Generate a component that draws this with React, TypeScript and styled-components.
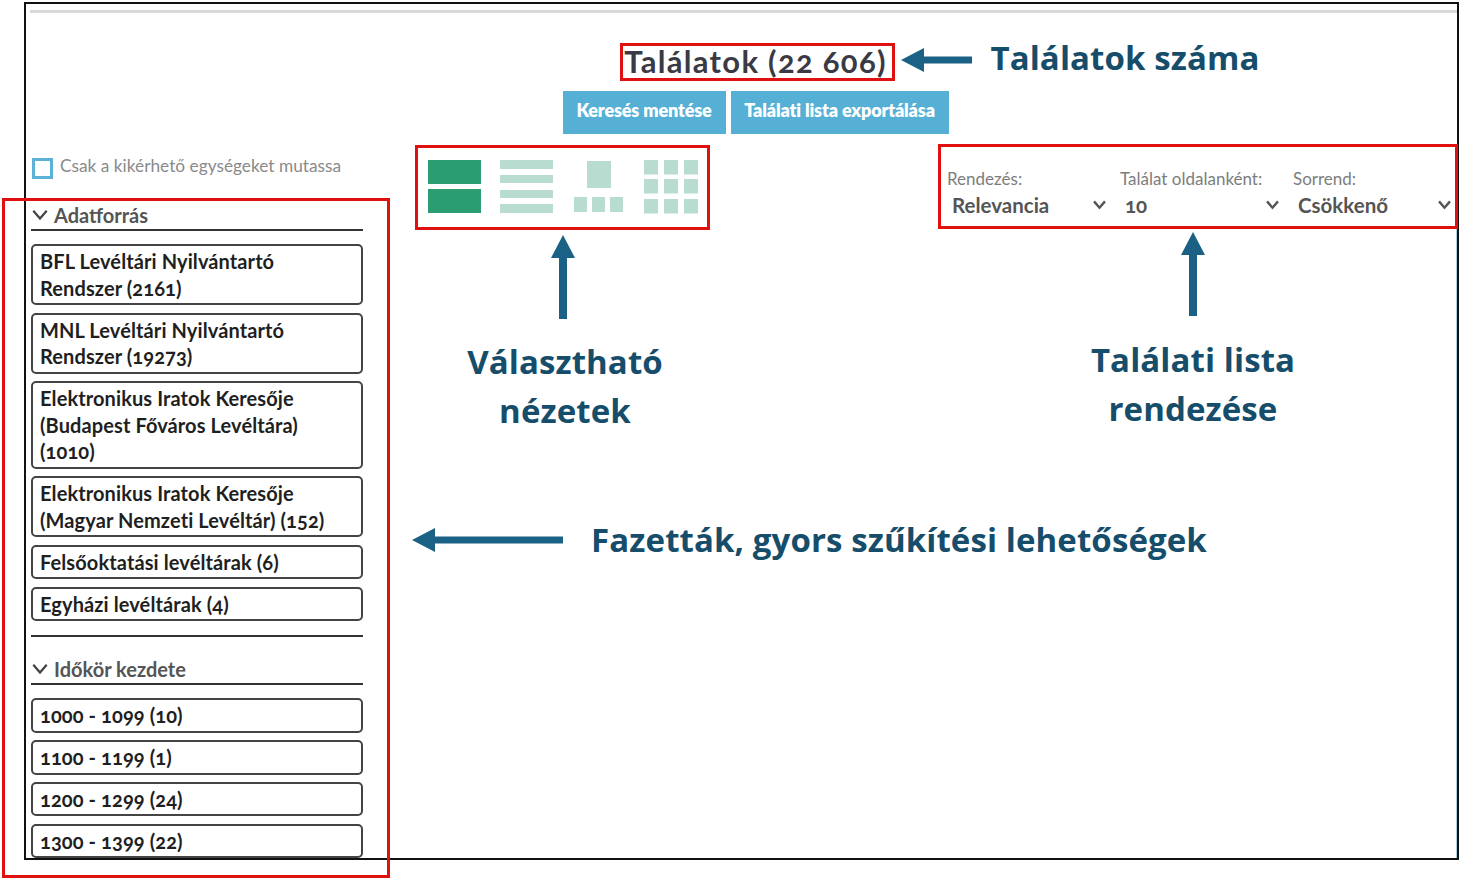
import React from "react";
import styled, { createGlobalStyle } from "styled-components";

const Global = createGlobalStyle`
  html, body { margin: 0; padding: 0; background: #fff; }
  body { width: 1460px; height: 878px; overflow: hidden; font-family: Lato, "Open Sans", sans-serif; font-variant-numeric: oldstyle-nums; }
  * { box-sizing: border-box; }
`;

const Page = styled.div`
  position: relative;
  width: 1460px;
  height: 878px;
  padding: 2px 1px 18px 24px;
  background: #fff;
`;

const Frame = styled.div`
  width: 100%;
  height: 100%;
  border: 2px solid #111;
  overflow: hidden;
  padding: 6px 0 0 4px;
`;

const EdgeTint = styled.div`
  position: absolute;
  left: 1456px;
  top: 229px;
  width: 1px;
  height: 629px;
  background: #a9d0e0;
`;

const TopRule = styled.div`
  height: 3px;
  background: #d9d9d9;
`;

const Header = styled.header`
  display: flex;
  flex-direction: column;
  align-items: center;
  padding: 29px 0 0 0;
  margin-left: 24px;
`;

const Title = styled.h1`
  margin: 0;
  font-size: 31px;
  line-height: 38px;
  font-weight: 700;
  color: #3a3a44;
  letter-spacing: 1.3px;
`;

const Buttons = styled.div`
  display: flex;
  gap: 5px;
  margin-top: 11px;
`;

const ActionButton = styled.button<{ $w: number }>`
  width: ${(p) => p.$w}px;
  height: 43px;
  border: 0;
  padding: 0 0 5px;
  background: #56b0d6;
  color: #fff;
  font: 800 18px/38px Lato, sans-serif;
  letter-spacing: -0.15px;
`;

const Columns = styled.div`
  display: grid;
  grid-template-columns: 332px 1fr;
  column-gap: 52px;
  padding-left: 1px;
`;

const Sidebar = styled.aside`
  display: flex;
  flex-direction: column;
  padding-top: 24px;
`;

const CheckRow = styled.label`
  display: flex;
  align-items: flex-start;
  gap: 7px;
  height: 41px;
  margin-left: 1px;
  color: #8a8a8a;
  font-size: 17.3px;
  line-height: 15px;
`;

const CheckBox = styled.span`
  width: 21px;
  height: 21px;
  border: 3px solid #5cb1d6;
  flex: none;
`;

const Section = styled.section`
  display: flex;
  flex-direction: column;
`;

const SectionHead = styled.div`
  display: flex;
  align-items: center;
  gap: 6px;
  height: 32px;
  border-bottom: 2px solid #333;
  padding: 1px 0 0 1px;
  color: #555;
  font-size: 20px;
  font-weight: 700;
`;

const FacetList = styled.div<{ $gap: number }>`
  display: flex;
  flex-direction: column;
  gap: ${(p) => p.$gap}px;
  margin-top: 13px;
`;

const Facet = styled.div`
  border: 2px solid #444;
  border-radius: 5px;
  padding: 2px 7px;
  color: #1f1f1f;
  font-size: 20px;
  line-height: 26.5px;
  font-weight: 700;
  letter-spacing: 0.1px;
`;

const Divider = styled.div`
  height: 2px;
  background: #333;
  margin: 14px 0 16px;
`;

const Main = styled.main`
  display: flex;
  justify-content: space-between;
  align-items: flex-start;
  padding-top: 26px;
`;

const Views = styled.svg`
  display: block;
  width: 270px;
  height: 54px;
  margin-left: 13px;
  filter: blur(0.4px);
`;

const SortBar = styled.div`
  display: grid;
  grid-template-columns: 173px 173px 158px;
  margin-top: 9px;
  margin-right: 6px;
`;

const SortField = styled.div`
  display: flex;
  flex-direction: column;
  padding-right: 14px;
  &:last-child {
    padding-right: 0;
  }
`;

const SortLabel = styled.span`
  color: #7d7d7d;
  font-size: 17px;
  line-height: 20px;
  font-weight: 400;
`;

const SortValue = styled.div`
  display: flex;
  align-items: center;
  justify-content: space-between;
  height: 32px;
  padding-left: 5px;
  color: #555;
  font-size: 20.5px;
  font-weight: 700;
`;

const RedBox = styled.div<{ $l: number; $t: number; $w: number; $h: number }>`
  position: absolute;
  left: ${(p) => p.$l}px;
  top: ${(p) => p.$t}px;
  width: ${(p) => p.$w}px;
  height: ${(p) => p.$h}px;
  border: 3px solid #e01010;
  pointer-events: none;
`;

const Callout = styled.div<{ $l: number; $t: number; $w: number }>`
  position: absolute;
  left: ${(p) => p.$l}px;
  top: ${(p) => p.$t}px;
  width: ${(p) => p.$w}px;
  color: #154d6a;
  font-family: "Open Sans", sans-serif;
  font-size: 33px;
  font-weight: 700;
  letter-spacing: 0.1px;
  line-height: 49px;
  text-align: center;
  white-space: nowrap;
`;

const ArrowSvg = styled.svg<{ $l: number; $t: number }>`
  position: absolute;
  left: ${(p) => p.$l}px;
  top: ${(p) => p.$t}px;
`;

const Chevron = ({ size = 13, color = "#555", sw = 2.6 }: { size?: number; color?: string; sw?: number }) => (
  <svg width={size} height={size * 0.7} viewBox="0 0 14 10" fill="none">
    <path d="M1 1.5 L7 8.5 L13 1.5" stroke={color} strokeWidth={sw} />
  </svg>
);

const LeftArrow = ({ l, t, w }: { l: number; t: number; w: number }) => (
  <ArrowSvg $l={l} $t={t} width={w} height={24} viewBox={`0 0 ${w} 24`}>
    <path d={`M0 12 L23 0 V8.5 H${w} V15.5 H23 V24 Z`} fill="#1a6185" />
  </ArrowSvg>
);

const UpArrow = ({ l, t, h }: { l: number; t: number; h: number }) => (
  <ArrowSvg $l={l} $t={t} width={24} height={h} viewBox={`0 0 24 ${h}`}>
    <path d={`M12 0 L24 23 H16 V${h} H8 V23 H0 Z`} fill="#1a6185" />
  </ArrowSvg>
);

const sources = [
  ["BFL Levéltári Nyilvántartó", "Rendszer (2161)"],
  ["MNL Levéltári Nyilvántartó", "Rendszer (19273)"],
  ["Elektronikus Iratok Keresője", "(Budapest Főváros Levéltára)", "(1010)"],
  ["Elektronikus Iratok Keresője", "(Magyar Nemzeti Levéltár) (152)"],
  ["Felsőoktatási levéltárak (6)"],
  ["Egyházi levéltárak (4)"],
];
const periods = ["1000 - 1099 (10)", "1100 - 1199 (1)", "1200 - 1299 (24)", "1300 - 1399 (22)"];
const sorts = [
  ["Rendezés:", "Relevancia"],
  ["Találat oldalanként:", "10"],
  ["Sorrend:", "Csökkenő"],
];

const DARK = "#2a9d72";
const LIGHT = "#b8dccf";

export default function App() {
  return (
    <Page>
      <Global />
      <Frame>
        <TopRule />
        <Header>
          <Title>Találatok (22 606)</Title>
          <Buttons>
            <ActionButton $w={163}>Keresés mentése</ActionButton>
            <ActionButton $w={218}>Találati lista exportálása</ActionButton>
          </Buttons>
        </Header>
        <Columns>
          <Sidebar>
            <CheckRow>
              <CheckBox />
              Csak a kikérhető egységeket mutassa
            </CheckRow>
            <Section>
              <SectionHead>
                <Chevron size={16} color="#444" sw={2} />
                Adatforrás
              </SectionHead>
              <FacetList $gap={7.6}>
                {sources.map((lines) => (
                  <Facet key={lines[0] + lines[1]}>
                    {lines.map((l) => (
                      <div key={l}>{l}</div>
                    ))}
                  </Facet>
                ))}
              </FacetList>
            </Section>
            <Divider />
            <Section>
              <SectionHead>
                <Chevron size={16} color="#444" sw={2} />
                Időkör kezdete
              </SectionHead>
              <FacetList $gap={7.2}>
                {periods.map((p) => (
                  <Facet key={p}>{p}</Facet>
                ))}
              </FacetList>
            </Section>
          </Sidebar>
          <Main>
            <Views viewBox="0 0 270 54">
              <g fill={DARK}>
                <rect x="0" y="0" width="53" height="24" />
                <rect x="0" y="29" width="53" height="24" />
              </g>
              <g fill={LIGHT}>
                <rect x="72" y="0" width="53" height="9" />
                <rect x="72" y="15" width="53" height="8" />
                <rect x="72" y="30" width="53" height="8" />
                <rect x="72" y="44" width="53" height="9" />
                <rect x="159" y="1" width="24" height="27" />
                <rect x="146" y="37" width="13" height="15" />
                <rect x="164" y="37" width="13" height="15" />
                <rect x="182" y="37" width="13" height="15" />
                {[216, 236, 256].map((x) =>
                  [0, 19, 39].map((y) => <rect key={`${x}-${y}`} x={x} y={y} width="14" height="14.5" />)
                )}
              </g>
            </Views>
            <SortBar>
              {sorts.map(([label, value]) => (
                <SortField key={label}>
                  <SortLabel>{label}</SortLabel>
                  <SortValue>
                    {value}
                    <Chevron size={13} />
                  </SortValue>
                </SortField>
              ))}
            </SortBar>
          </Main>
        </Columns>
      </Frame>
      <EdgeTint />

      <RedBox $l={620} $t={43} $w={275} $h={38} />
      <RedBox $l={415} $t={145} $w={295} $h={85} />
      <RedBox $l={938} $t={144} $w={520} $h={85} />
      <RedBox $l={2} $t={198} $w={388} $h={680} />

      <LeftArrow l={901} t={48} w={71} />
      <LeftArrow l={412} t={528} w={151} />
      <UpArrow l={551} t={235} h={84} />
      <UpArrow l={1181} t={232} h={84} />

      <Callout $l={925} $t={33} $w={400}>Találatok száma</Callout>
      <Callout $l={365} $t={337} $w={400}>
        Választható
        <br />
        nézetek
      </Callout>
      <Callout $l={993} $t={335} $w={400}>
        Találati lista
        <br />
        rendezése
      </Callout>
      <Callout $l={491} $t={515} $w={816}>Fazetták, gyors szűkítési lehetőségek</Callout>
    </Page>
  );
}
